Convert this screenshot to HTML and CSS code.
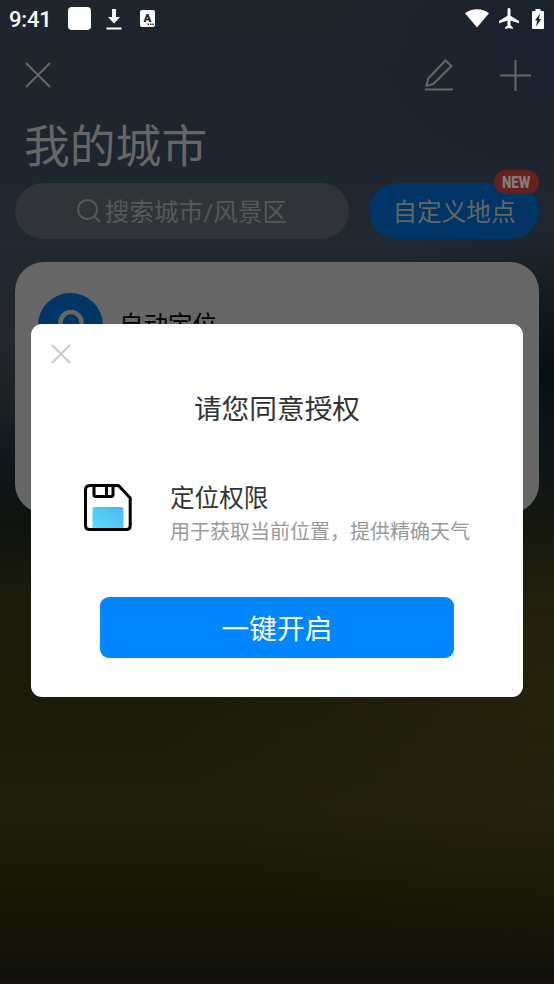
FILE: index.html
```html
<!DOCTYPE html>
<html lang="zh-CN">
<head>
<meta charset="utf-8">
<title>我的城市</title>
<link rel="stylesheet" href="styles.css">
</head>
<body>
<main class="screen">
  <header class="status">
    <span class="clock">9:41</span>
    <span class="app-square"></span>
    <svg class="download" width="16" height="22" viewBox="0 0 16 22"><path fill="#fff" d="M6 1h4v8h4l-6 6.500L2 9h4zM.5 19.500h15v2H.5z"/></svg>
    <svg class="lang" width="15" height="17" viewBox="0 0 15 17"><rect width="15" height="17" rx="2" fill="#fff"/><text x="7.300" y="12" text-anchor="middle">A</text><path fill="#20252c" d="M7.500 13.500H9V15H7.500zM10 13.500h1.500V15H10zM12.300 13.500h1.500V15h-1.500z"/></svg>
    <span class="spacer"></span>
    <svg class="wifi" width="24" height="19" viewBox="0 0 24 19"><path fill="#fff" d="M0 4.300C7-1.200 17-1.200 24 4.300L12 18.500z"/></svg>
    <svg class="plane" width="20" height="21" viewBox="0 0 20 21"><path fill="#fff" d="M10 0c1 0 1.500.8 1.500 1.600v6.100L20 13v2.200l-8.500-2.700v5l2.300 1.700V21L10 19.900 6.200 21v-1.800l2.300-1.700v-5L0 15.200V13l8.500-5.300V1.600C8.500.8 9 0 10 0z"/></svg>
    <svg class="battery" width="12" height="20" viewBox="0 0 12 20"><path fill="#fff" fill-rule="evenodd" d="M3.500 0h5v2H11q1 0 1 1v16q0 1-1 1H1q-1 0-1-1V3q0-1 1-1h2.500zM8 4.500L3 11.500h2.200L4 17.500 9.300 10H7z"/></svg>
  </header>
  <nav class="toolbar">
    <svg class="close" width="26" height="26" viewBox="0 0 26 26"><path d="M1 1l24 24M25 1L1 25"/></svg>
    <span class="spacer"></span>
    <svg class="edit" width="28" height="32" viewBox="0 0 28 32"><path d="M20.500 1.500l6 5.500L8 25.300l-6.500 1.400L3.200 19.500zM0 30.500h28"/></svg>
    <svg class="add" width="31" height="31" viewBox="0 0 31 31"><path d="M15.500 0v31M0 15.500h31"/></svg>
  </nav>
  <h1>我的城市</h1>
  <div class="actions">
    <div class="search"><svg width="24" height="24" viewBox="0 0 24 24"><circle cx="10.500" cy="10.500" r="9.500"/><path d="M17.300 17.300l5.500 5.500"/></svg><span>搜索城市/风景区</span></div>
    <div class="custom"><span>自定义地点</span><span class="badge"><b>NEW</b></span></div>
  </div>
  <section class="card">
    <span class="pin"><svg width="26" height="34" viewBox="0 0 26 34"><path d="M13 2a10.500 10.500 0 0 1 10.500 10.500c0 7-10.500 18-10.500 18S2.500 19.500 2.500 12.500A10.500 10.500 0 0 1 13 2z"/></svg></span>
    <span>自动定位</span>
  </section>
  <section class="modal">
    <svg class="dismiss" width="20" height="20" viewBox="0 0 20 20"><path d="M1 1l18 18M19 1L1 19"/></svg>
    <h2>请您同意授权</h2>
    <div class="permission">
      <svg class="disk" width="48" height="48" viewBox="0 0 48 48">
        <defs><linearGradient id="blue" x1="0" y1="1" x2="1" y2="0"><stop stop-color="#5bdcfb"/><stop offset="1" stop-color="#4cb8ef"/></linearGradient></defs>
        <rect x="8.500" y="23" width="31" height="22" rx="2" fill="url(#blue)"/>
        <path fill="none" stroke="#000" stroke-width="3" stroke-linejoin="round" d="M6 1.500h28.500L46.200 14v27.500q0 4-4 4H6q-4.500 0-4.500-4V6q0-4.500 4.500-4.500zM10 2v8.500q0 2 2 2h15q2 0 2-2V2M22.500 2v10"/>
      </svg>
      <div class="copy"><h3>定位权限</h3><p>用于获取当前位置，提供精确天气</p></div>
    </div>
    <button>一键开启</button>
  </section>
</main>
</body>
</html>
```
FILE: styles.css
```css
* { box-sizing: border-box; }
body { margin: 0; font-family: Roboto, "Noto Sans CJK SC", sans-serif; }
.screen {
  position: relative;
  width: 554px;
  height: 984px;
  overflow: hidden;
  color: #666;
  background:
    radial-gradient(ellipse 400px 260px at 100% 690px, rgba(42, 37, 14, .65), transparent),
    radial-gradient(ellipse 260px 150px at 100% 375px, rgba(3, 13, 19, .95), transparent),
    radial-gradient(ellipse 230px 180px at 100% 30px, rgba(26, 32, 46, .7), transparent),
    linear-gradient(#20252c 0, #1e252e 150px, #202830 245px, #24272c 340px, #1c2124 400px, #0e171a 465px, #10140f 525px, #1a1a0c 590px, #1a1a09 700px, #201e0c 810px, #191906 880px, #12120a 965px, #100f0b 980px, #181113 982px);
}
.spacer { flex: 1; }
.status { height: 36px; display: flex; align-items: center; padding: 1px 10px 0 9px; color: #fff; }
.clock { width: 59px; font-size: 22px; font-weight: 500; line-height: 32px; letter-spacing: -.2px; padding-top: 2px; }
.app-square { width: 23px; height: 23px; border-radius: 4px; background: #fff; }
.download { margin-left: 15px; }
.lang { margin-left: 18px; }
.lang text { font: 900 11.500px Roboto, sans-serif; fill: #20252c; }
.plane { margin-left: 10px; }
.battery { margin-left: 13px; }
.toolbar { height: 79px; display: flex; align-items: center; padding: 0 23px 0 25px; }
.toolbar svg { fill: none; stroke: #666; stroke-width: 2; }
.close, .edit { margin-bottom: 1px; }
.add { margin-left: 47px; }
h1, h2, h3, p { margin: 0; font-weight: 400; }
h1 { height: 68px; padding: 3px 0 0 24px; font-size: 45.800px; line-height: 60px; }
.actions { display: grid; grid-template-columns: 334px 170px; gap: 20px; padding-left: 15px; height: 56px; font-size: 24.600px; }
.search, .custom { border-radius: 28px; display: flex; align-items: center; justify-content: center; line-height: 52px; white-space: nowrap; }
.search > span, .custom > span:first-child { padding-top: 4px; }
.search { background: #303439; color: #565859; gap: 4px; }
.search svg { fill: none; stroke: #565859; stroke-width: 2; }
.custom { position: relative; background: #003566; }
.badge { position: absolute; right: 0; top: -13px; width: 45px; height: 24px; border-radius: 12px; background: #66211f; color: #857b77; font: 700 16px/25px Roboto, sans-serif; display: flex; justify-content: center; }
.badge b { transform: scaleX(.83); }
.card { margin: 23px 15px 0; height: 251px; border-radius: 29px; background: #666; color: #000; display: flex; align-items: flex-start; padding: 31px 23px; font-size: 24.500px; line-height: 65px; }
.pin { width: 65px; height: 65px; margin-right: 16px; border-radius: 50%; background: #003566; display: flex; justify-content: center; padding-top: 17px; }
.pin path { fill: none; stroke: #666; stroke-width: 4.500; }
.modal { position: absolute; left: 31px; top: 324px; width: 492px; height: 373px; padding: 20px 21px; border-radius: 11px; background: #fff; color: #333; display: flex; flex-direction: column; }
.dismiss { margin-left: -1px; fill: none; stroke: #c8c8c8; stroke-width: 2; }
h2 { margin-top: 26px; font-size: 27.700px; line-height: 40px; text-align: center; }
.permission { display: flex; margin: 49px 0 0 32px; }
.disk { margin: 5px 0 0 0; }
.copy { margin-left: 38px; }
h3 { font-size: 24.600px; line-height: 39px; }
p { color: #999; font-size: 20px; line-height: 29px; white-space: nowrap; }
button { width: 354px; height: 61px; margin: 50px auto 0; padding: 4px 0 0; border: 0; border-radius: 9px; background: #0086ff; color: #fff; font: 400 27.700px/57px Roboto, "Noto Sans CJK SC", sans-serif; }
```
